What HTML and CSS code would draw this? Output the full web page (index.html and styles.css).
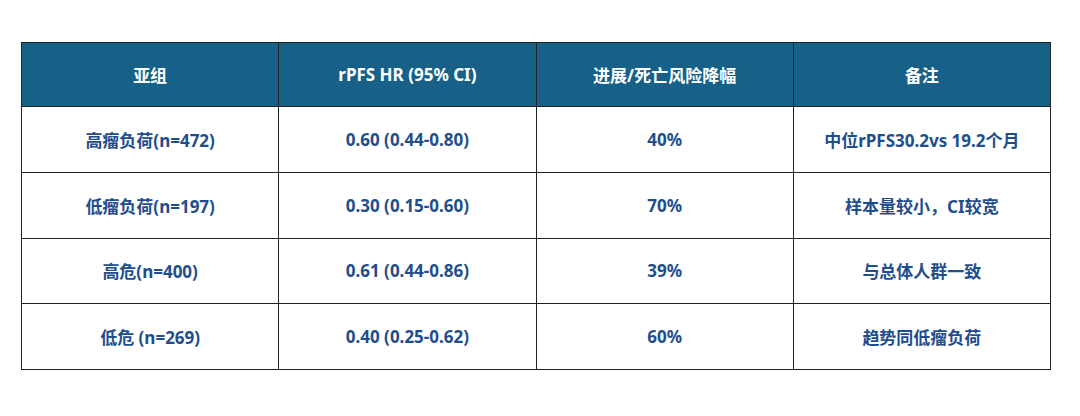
FILE: index.html
```html
<!DOCTYPE html>
<html lang="zh-CN">
<head>
<meta charset="utf-8">
<title>亚组分析</title>
<link rel="stylesheet" href="styles.css">
</head>
<body>
<div class="wrap">
<table class="tbl">
  <thead>
    <tr><th>亚组</th><th>rPFS HR (95% CI)</th><th>进展/死亡风险降幅</th><th>备注</th></tr>
  </thead>
  <tbody>
    <tr><td>高瘤负荷(n=472)</td><td>0.60 (0.44-0.80)</td><td>40%</td><td>中位rPFS30.2vs 19.2个月</td></tr>
    <tr><td>低瘤负荷(n=197)</td><td>0.30 (0.15-0.60)</td><td>70%</td><td>样本量较小，CI较宽</td></tr>
    <tr><td>高危(n=400)</td><td>0.61 (0.44-0.86)</td><td>39%</td><td>与总体人群一致</td></tr>
    <tr><td>低危 (n=269)</td><td>0.40 (0.25-0.62)</td><td>60%</td><td>趋势同低瘤负荷</td></tr>
  </tbody>
</table>
</div>
</body>
</html>
```
FILE: styles.css
```css
html, body { margin: 0; padding: 0; background: #fff; }
body {
  font-family: "Noto Sans", "Open Sans", "Noto Sans CJK SC", sans-serif;
  font-weight: 700;
}
.wrap { padding: 42px 29px 0 21px; }
.tbl {
  width: 1030px;
  border-collapse: collapse;
  table-layout: fixed;
}
.tbl th, .tbl td {
  border: 1px solid #222;
  text-align: center;
  vertical-align: middle;
  font-size: 17px;
  padding: 0;
}
.tbl th {
  background: #176188;
  color: #fff;
  height: 63px;
}
.tbl td {
  color: #1f4e8d;
  height: 64.75px;
}
```
